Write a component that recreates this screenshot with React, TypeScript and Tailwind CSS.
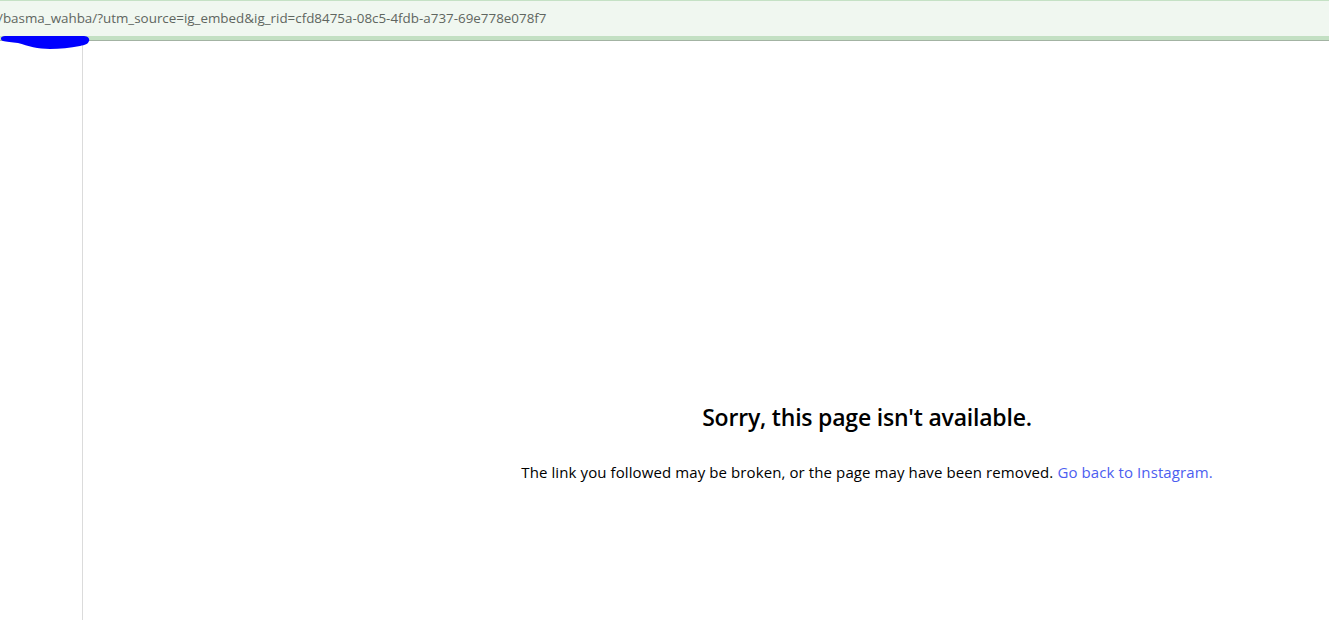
import React from "react";

const Scribble = () => (
  <svg
    width="92"
    height="20"
    viewBox="0 0 92 20"
    className="absolute left-0 top-[31px]"
  >
    <path
      d="M5 5 L84 5 C88 5 90 8 89 10 C88 13 85 14 80 15 C70 17 60 18 50 18 C38 18 28 15 18 12 C12 11 6 11 3 10 C0 9 0 5 5 5 Z"
      fill="#0000ff"
    />
  </svg>
);

const App = () => {
  return (
    <div className="w-[1329px] h-[620px] bg-white overflow-hidden flex flex-col font-['Open_Sans',sans-serif]">
      <div className="relative shrink-0">
        <div className="h-[36px] bg-[#f0f7f0] border-t border-[#c5e1c5] flex items-center overflow-hidden">
          <span className="text-[13.4px] text-[#5f6660] ml-[-2px] whitespace-nowrap">
            /basma_wahba/?utm_source=ig_embed&amp;ig_rid=cfd8475a-08c5-4fdb-a737-69e778e078f7
          </span>
        </div>
        <div className="h-[5px] bg-[#c3e0c3] border-b border-[#a3b3a3]"></div>
        <Scribble />
      </div>
      <div className="flex flex-1">
        <div className="w-[83px] border-r border-[#dbdbdb] shrink-0"></div>
        <div className="flex-1 pl-[322px] flex flex-col items-center pt-[361px] text-black">
          <h2 className="text-[23px] font-semibold leading-[30px] tracking-[-0.2px]">
            Sorry, this page isn't available.
          </h2>
          <p className="mt-[30px] text-[15px] leading-[20px] whitespace-nowrap tracking-[0.1px]">
            The link you followed may be broken, or the page may have been
            removed.{" "}
            <a className="text-[#4c5ef0]">Go back to Instagram.</a>
          </p>
        </div>
      </div>
    </div>
  );
};

export default App;
